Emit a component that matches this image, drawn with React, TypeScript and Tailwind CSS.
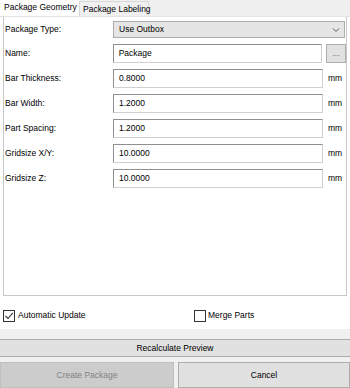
import React from "react";

const rows = [
  { label: "Bar Thickness:", value: "0.8000" },
  { label: "Bar Width:", value: "1.2000" },
  { label: "Part Spacing:", value: "1.2000" },
  { label: "Gridsize X/Y:", value: "10.0000" },
  { label: "Gridsize Z:", value: "10.0000" },
];

function Check({ checked }: { checked: boolean }) {
  return (
    <div className="w-[12px] h-[12px] border border-[#333333] bg-white flex items-center justify-center">
      {checked && (
        <svg width="10" height="10" viewBox="0 0 10 10">
          <path d="M1.5 5 L4 7.5 L8.8 1.8" fill="none" stroke="#333" strokeWidth="1.1" />
        </svg>
      )}
    </div>
  );
}

export default function App() {
  return (
    <div
      className="w-[350px] h-[388px] bg-white flex flex-col text-[8.5px] text-black overflow-hidden whitespace-nowrap"
      style={{ fontFamily: '"Liberation Sans", Arial, sans-serif' }}
    >
      {/* Tabs */}
      <div className="h-[17px] bg-[#f0f0f0] flex items-end border-b border-[#e3e3e3]">
        <div className="h-[17px] w-[79px] bg-white flex items-center pl-[4px] whitespace-nowrap">Package Geometry</div>
        <div className="h-[15px] w-[70px] bg-[#f0f0f0] border border-b-0 border-[#d9d9d9] flex items-center pl-[3px] whitespace-nowrap">
          Package Labeling
        </div>
      </div>

      {/* Panel */}
      <div className="mx-[3px] h-[279px] border-x border-b border-[#c8c8c8] border-t-0 flex flex-col">
        {/* Package type */}
        <div className="flex items-center h-[17px] mt-[4px]">
          <div className="w-[109px] pl-[1px]">Package Type:</div>
          <div className="flex-1 h-[17px] bg-[#e5e5e5] border border-[#adadad] flex items-center pl-[5px] pr-[4px] mr-[1px]">
            <span className="flex-1">Use Outbox</span>
            <svg width="8" height="6" viewBox="0 0 8 6">
              <path d="M1 1.5 L4 4.5 L7 1.5" fill="none" stroke="#555" strokeWidth="1" />
            </svg>
          </div>
        </div>
        {/* Name */}
        <div className="flex items-center h-[19px] mt-[6px]">
          <div className="w-[109px] pl-[1px]">Name:</div>
          <div className="w-[210px] h-[19px] border border-[#8f8f8f] border-b-[#d0d0d0] border-r-[#d0d0d0] bg-white flex items-center pl-[5px]">
            Package
          </div>
          <div className="ml-[4px] w-[20px] h-[19px] bg-[#e1e1e1] border border-[#adadad] flex items-center justify-center text-[#666]">
            ...
          </div>
        </div>
        {rows.map((r) => (
          <div key={r.label} className="flex items-center h-[19px] mt-[6px]">
            <div className="w-[109px] pl-[1px]">{r.label}</div>
            <div className="w-[210px] h-[19px] border border-[#8f8f8f] border-b-[#d0d0d0] border-r-[#d0d0d0] bg-white flex items-center pl-[5px]">
              {r.value}
            </div>
            <div className="ml-[5px]">mm</div>
          </div>
        ))}
      </div>

      {/* Checkboxes */}
      <div className="h-[33px] flex items-center pl-[3px] pt-[6px]">
        <div className="flex items-center w-[191px]">
          <Check checked={true} />
          <span className="ml-[3px]">Automatic Update</span>
        </div>
        <div className="flex items-center">
          <Check checked={false} />
          <span className="ml-[2px]">Merge Parts</span>
        </div>
      </div>

      {/* Bottom area */}
      <div className="flex-1 bg-[#f0f0f0] flex flex-col pt-[10px]">
        <div className="h-[18px] bg-[#e1e1e1] border-y border-[#adadad] flex items-center justify-center">
          Recalculate Preview
        </div>
        <div className="flex gap-[4px] mt-[5px] flex-1">
          <div className="w-[174px] bg-[#cccccc] border border-[#bfbfbf] flex items-center justify-center text-[#838383]">
            Create Package
          </div>
          <div className="flex-1 bg-[#e1e1e1] border border-[#adadad] flex items-center justify-center">
            Cancel
          </div>
        </div>
      </div>
    </div>
  );
}
